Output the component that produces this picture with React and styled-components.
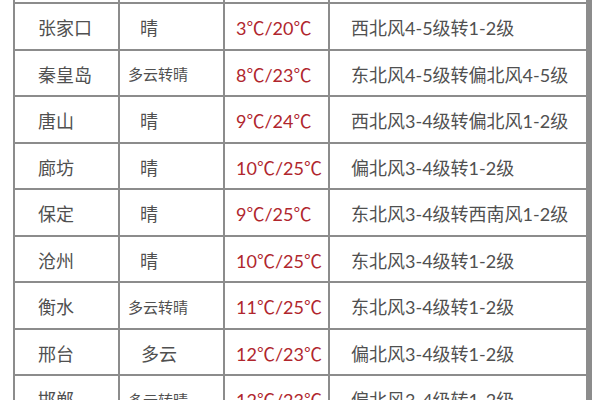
import styled, { createGlobalStyle } from "styled-components";

const GlobalStyle = createGlobalStyle`
  html, body {
    margin: 0;
    padding: 0;
    background: #ffffff;
  }
  body {
    font-family: "Lato", "Noto Sans CJK SC", sans-serif;
  }
`;

const rows = [
  ["张家口", "晴", "3℃/20℃", "西北风4-5级转1-2级"],
  ["秦皇岛", "多云转晴", "8℃/23℃", "东北风4-5级转偏北风4-5级"],
  ["唐山", "晴", "9℃/24℃", "西北风3-4级转偏北风1-2级"],
  ["廊坊", "晴", "10℃/25℃", "偏北风3-4级转1-2级"],
  ["保定", "晴", "9℃/25℃", "东北风3-4级转西南风1-2级"],
  ["沧州", "晴", "10℃/25℃", "东北风3-4级转1-2级"],
  ["衡水", "多云转晴", "11℃/25℃", "东北风3-4级转1-2级"],
  ["邢台", "多云", "12℃/23℃", "偏北风3-4级转1-2级"],
  ["邯郸", "多云转晴", "12℃/23℃", "偏北风3-4级转1-2级"],
];

const App = () => {
  return (
    <>
      <GlobalStyle />
      <Page>
        <Table>
          {/* bottom edge of the row above, cut off by the crop */}
          <Edge />
          <Edge />
          <Edge />
          <Edge />
          {rows.map(([city, weather, temp, wind]) => (
            <Row key={city}>
              <Cell $pad={23}>{city}</Cell>
              <Weather $long={weather.length > 2} $pad={weather.length === 1 ? 20 : 21}>
                {weather}
              </Weather>
              <Temp>{temp}</Temp>
              <Wind>{wind}</Wind>
            </Row>
          ))}
        </Table>
      </Page>
    </>
  );
};

export default App;

const Page = styled.div`
  width: 600px;
  height: 400px;
  overflow: hidden;
  background: #ffffff;
  padding-left: 13px;
  box-sizing: border-box;
`;

const Table = styled.div`
  width: 575px;
  display: grid;
  grid-template-columns: 103px 103px 103px 256px;
  grid-template-rows: 2px;
  grid-auto-rows: 44.5px;
  gap: 2px;
  padding: 0 2px 2px;
  background: #8c8c8c;
`;

const Edge = styled.div`
  background: #ffffff;
`;

const Row = styled.div`
  display: contents;
`;

const Cell = styled.div`
  background: #ffffff;
  display: flex;
  align-items: center;
  padding-left: ${(p) => p.$pad}px;
  padding-top: 2px;
  box-sizing: border-box;
  color: #505050;
  font-size: 18px;
  white-space: nowrap;
  overflow: hidden;
`;

const Weather = styled(Cell)`
  padding-left: ${(p) => (p.$long ? 8 : p.$pad)}px;
  font-size: ${(p) => (p.$long ? 15 : 18)}px;
`;

const Temp = styled(Cell)`
  padding-left: 11px;
  color: #b0262d;
`;

const Wind = styled(Cell)`
  padding-left: 21px;
  font-size: 18px;
`;
